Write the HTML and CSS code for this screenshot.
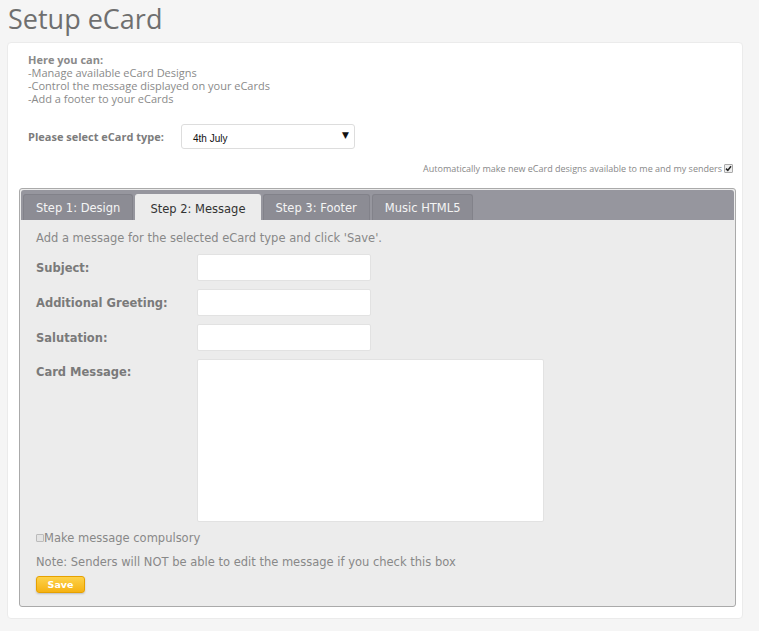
FILE: index.html
```html
<!DOCTYPE html>
<html>
<head>
<meta charset="utf-8">
<link rel="stylesheet" href="styles.css">
</head>
<body>
<h1 class="title">Setup eCard</h1>
<div class="card">
  <div class="intro">
    <div class="intro-head">Here you can:</div>
    <div>-Manage available eCard Designs</div>
    <div>-Control the message displayed on your eCards</div>
    <div>-Add a footer to your eCards</div>
  </div>
  <div class="type-row">
    <label class="type-label">Please select eCard type:</label>
    <div class="select">
      <span class="select-text">4th July</span>
      <span class="select-arrow">&#9660;</span>
    </div>
  </div>
  <div class="auto-row">
    <span>Automatically make new eCard designs available to me and my senders</span>
    <span class="mini-check checked"><svg width="7" height="7" viewBox="0 0 7 7"><path d="M1 3.6 L2.8 5.4 L6 1.2" fill="none" stroke="#222" stroke-width="1.5"/></svg></span>
  </div>
  <div class="tabs">
    <div class="tab-bar">
      <div class="tab">Step 1: Design</div>
      <div class="tab active">Step 2: Message</div>
      <div class="tab">Step 3: Footer</div>
      <div class="tab">Music HTML5</div>
    </div>
    <div class="tab-body">
      <p class="lead">Add a message for the selected eCard type and click 'Save'.</p>
      <div class="form">
        <label class="flabel">Subject:</label>
        <div class="input"></div>
        <label class="flabel">Additional Greeting:</label>
        <div class="input"></div>
        <label class="flabel">Salutation:</label>
        <div class="input"></div>
        <label class="flabel msg">Card Message:</label>
        <div class="textarea"></div>
      </div>
      <div class="compulsory"><span class="mini-check"></span>Make message compulsory</div>
      <p class="note">Note: Senders will NOT be able to edit the message if you check this box</p>
      <button class="save">Save</button>
    </div>
  </div>
</div>
</body>
</html>
```

FILE: styles.css
```css
html, body {
  margin: 0;
  padding: 0;
  background: #f5f5f5;
}
body {
  font-family: "Open Sans", sans-serif;
  color: #888;
}
.title {
  margin: 0;
  padding: 0 0 0 8px;
  height: 42px;
  font-family: "Open Sans", sans-serif;
  font-weight: 400;
  font-size: 27px;
  line-height: 37px;
  color: #6f6f6f;
}
.card {
  margin: 0 16px 0 7px;
  background: #fff;
  border: 1px solid #ebebeb;
  border-radius: 4px;
  padding: 10px 6px 10px 11px;
  height: 555px;
}
.intro {
  padding-left: 9px;
  font-size: 11px;
  line-height: 13px;
  color: #8a8a8a;
}
.intro-head {
  font-weight: 700;
}
.type-row {
  display: flex;
  align-items: center;
  margin-top: 19px;
  padding-left: 9px;
}
.type-label {
  width: 153px;
  font-size: 11px;
  font-weight: 700;
  color: #7c7c7c;
}
.select {
  height: 23px;
  border: 1px solid #ddd;
  border-radius: 3px;
  display: flex;
  align-items: center;
  justify-content: space-between;
  padding: 0 5px 0 11px;
  box-sizing: content-box;
  width: 156px;
}
.select-text {
  font-family: "Liberation Sans", Arial, sans-serif;
  font-size: 10px;
  color: #111;
  padding-top: 4px;
}
.select-arrow {
  font-family: "DejaVu Sans", sans-serif;
  font-size: 9px;
  color: #111;
  margin-top: -3px;
}
.auto-row {
  display: flex;
  justify-content: flex-end;
  align-items: center;
  gap: 2px;
  margin-top: 13px;
  padding-right: 3px;
  font-size: 9px;
  color: #888;
}
.mini-check {
  display: inline-block;
  width: 7px;
  height: 7px;
  border: 1px solid #aaa;
  background: #eee;
  border-radius: 1px;
  box-sizing: content-box;
}
.mini-check svg {
  display: block;
}
.tabs {
  margin-top: 13px;
  width: 713px;
  height: 415px;
  border: 1px solid #aaa;
  border-radius: 3px;
  background: #ececec;
  padding: 1px;
  box-sizing: content-box;
}
.tab-bar {
  display: flex;
  gap: 2px;
  background: #96969e;
  border-radius: 3px 3px 0 0;
  padding: 4px 2px 0 2px;
  height: 26px;
}
.tab {
  font-family: "DejaVu Sans", Verdana, sans-serif;
  font-size: 11.5px;
  color: #f4f4f4;
  background: #8c8c94;
  border: 1px solid #82828a;
  border-bottom: none;
  border-radius: 3px 3px 0 0;
  padding: 0 12px;
  line-height: 26px;
  height: 26px;
  box-sizing: border-box;
}
.tab.active {
  background: #ececec;
  color: #333;
  border-color: #ececec;
  height: 27px;
  padding: 1px 14px 0;
}
.tab-body {
  padding: 10px 14px 0 15px;
  font-family: "DejaVu Sans", Verdana, sans-serif;
}
.lead {
  margin: 0;
  font-size: 11.5px;
  line-height: 16px;
  color: #888;
}
.form {
  margin-top: 8px;
  display: grid;
  grid-template-columns: 161px 174px;
  row-gap: 8px;
  align-items: center;
}
.flabel {
  font-size: 11.5px;
  font-weight: 700;
  color: #7a7a7a;
}
.flabel.msg {
  align-self: start;
  padding-top: 6px;
}
.input {
  height: 27px;
  background: #fff;
  border: 1px solid #e2e2e2;
  border-radius: 2px;
  box-sizing: border-box;
}
.textarea {
  width: 347px;
  height: 163px;
  background: #fff;
  border: 1px solid #e2e2e2;
  border-radius: 2px;
  box-sizing: border-box;
}
.compulsory {
  margin-top: 9px;
  font-size: 11.5px;
  color: #888;
  display: flex;
  align-items: center;
  line-height: 14px;
}
.compulsory .mini-check {
  width: 6px;
  height: 6px;
  border-color: #bbb;
  background: #e4e4e4;
}
.note {
  margin: 10px 0 0;
  font-size: 11.5px;
  line-height: 14px;
  color: #888;
}
.save {
  margin-top: 7px;
  width: 49px;
  height: 17px;
  border: 1px solid #e6a100;
  border-radius: 3px;
  background: linear-gradient(#fdd24a, #f6b213);
  color: #fff;
  font-family: "DejaVu Sans", Verdana, sans-serif;
  font-weight: 700;
  font-size: 9.5px;
  padding: 0;
  box-shadow: 0 1px 2px rgba(0,0,0,0.2);
}
```
